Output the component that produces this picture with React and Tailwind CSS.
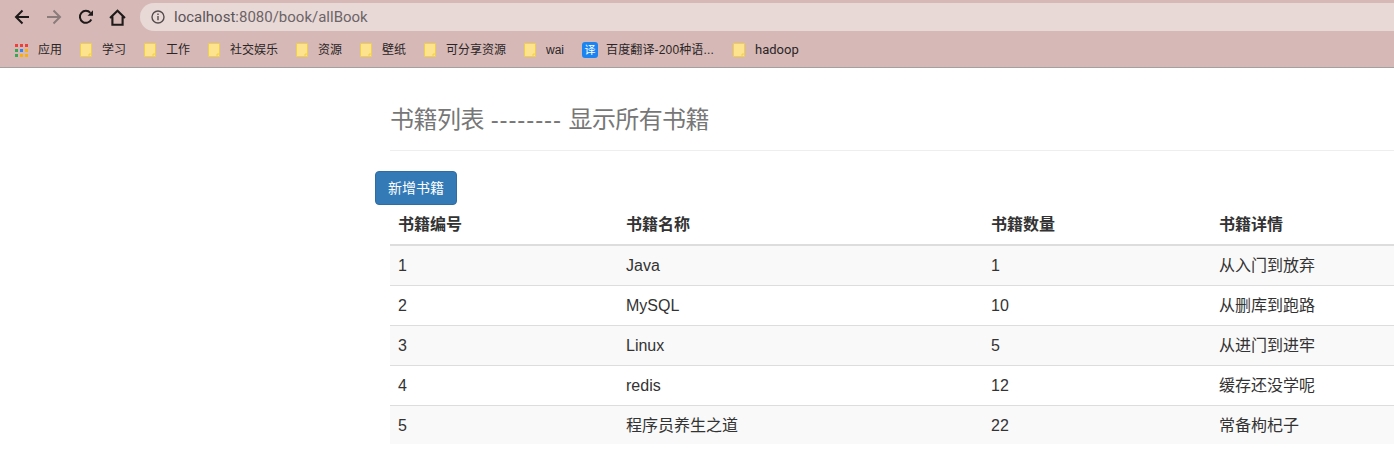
import React from 'react';

const bookmarks = [
  { label: '学习', gap: 'w-[64px]' },
  { label: '工作', gap: 'w-[64px]' },
  { label: '社交娱乐', gap: 'w-[88px]' },
  { label: '资源', gap: 'w-[64px]' },
  { label: '壁纸', gap: 'w-[64px]' },
  { label: '可分享资源', gap: 'w-[100px]' },
  { label: 'wai', gap: 'w-[58px]' },
];

const books = [
  { id: 1, name: 'Java', count: 1, detail: '从入门到放弃' },
  { id: 2, name: 'MySQL', count: 10, detail: '从删库到跑路' },
  { id: 3, name: 'Linux', count: 5, detail: '从进门到进牢' },
  { id: 4, name: 'redis', count: 12, detail: '缓存还没学呢' },
  { id: 5, name: '程序员养生之道', count: 22, detail: '常备枸杞子' },
];

const Folder = () => (
  <svg width="12" height="14" viewBox="0 0 12 14" className="shrink-0">
    <path d="M1 .5h10a.5.5 0 0 1 .5.5v12a.5.5 0 0 1-.5.5H1a.5.5 0 0 1-.5-.5V1A.5.5 0 0 1 1 .5z" fill="#fde38e" stroke="#f0cf4a" />
    <path d="M9 13v-2h2.5" fill="none" stroke="#f0cf4a" />
  </svg>
);

const AppsIcon = () => {
  const colors = ['#ef3f3a', '#ef3f3a', '#ef3f3a', '#34a853', '#2f86f0', '#fbb005', '#34a853', '#fbb005', '#fbb005'];
  return (
    <div className="grid grid-cols-3 gap-[2px] w-[13px] shrink-0">
      {colors.map((c, i) => (
        <div key={i} className="w-[3px] h-[3px]" style={{ backgroundColor: c }} />
      ))}
    </div>
  );
};

const App = () => {
  return (
    <div className="h-[467px] w-[1394px] overflow-hidden bg-white font-['Liberation_Sans','Noto_Sans_CJK_SC',sans-serif] text-[#333]">
      {/* Browser toolbar */}
      <div className="h-[68px] bg-[#d6b9b6] border-b border-[#a5a0a0] pt-[3px]">
        <div className="flex items-center h-[28px]">
          <div className="w-[140px] flex items-center">
            <svg width="16" height="16" viewBox="0 0 16 16" className="ml-[14px]" fill="none" stroke="#1f1a1a" strokeWidth="2">
              <path d="M15 8H2M8.5 1.5 2 8l6.5 6.5" />
            </svg>
            <svg width="16" height="16" viewBox="0 0 16 16" className="ml-[16px]" fill="none" stroke="#8b7b7b" strokeWidth="2">
              <path d="M1 8h13M7.5 1.5 14 8l-6.5 6.5" />
            </svg>
            <svg width="16" height="16" viewBox="0 0 16 16" className="ml-[16px]" fill="none">
              <path d="M13.3 10.5A6 6 0 1 1 12.4 3.8" stroke="#1f1a1a" strokeWidth="2" />
              <path d="M9.5 6.8H15V1.3z" fill="#1f1a1a" />
            </svg>
            <svg width="17" height="17" viewBox="0 0 16 16" className="ml-[15px]" fill="none" stroke="#1f1a1a" strokeWidth="2">
              <path d="M1 8.5 8 1.7l7 6.8M3.2 7v7.8h9.6V7" />
            </svg>
          </div>
          <div className="flex-1 h-[28px] rounded-l-[14px] bg-[#e8d9d7] flex items-center pl-[11px]">
            <svg width="14" height="14" viewBox="0 0 14 14" fill="none" stroke="#544c4c" strokeWidth="1.4">
              <circle cx="7" cy="7" r="6" />
              <path d="M7 6v4.3M7 3.4v1.5" />
            </svg>
            <span className="ml-[9px] mt-[1px] text-[15px] text-[#5b5457] font-['Roboto',sans-serif]">
              localhost<span className="text-[#6d6467]">:8080/book/allBook</span>
            </span>
          </div>
        </div>
        <div className="flex items-center h-[36px] pt-[2px] text-[12px] text-[#2b2526] pl-[15px]">
          <div className="flex items-center w-[65px]">
            <AppsIcon />
            <span className="ml-[10px]">应用</span>
          </div>
          {bookmarks.map((b) => (
            <div key={b.label} className={`flex items-center shrink-0 ${b.gap}`}>
              <Folder />
              <span className="ml-[10px]">{b.label}</span>
            </div>
          ))}
          <div className="flex items-center w-[151px] shrink-0">
            <div className="w-4 h-4 rounded-[3px] bg-[#1c84f0] text-white text-[11px] leading-4 text-center shrink-0">译</div>
            <span className="ml-2 tracking-[0.15px]">百度翻译-200种语...</span>
          </div>
          <div className="flex items-center">
            <Folder />
            <span className="ml-[10px] font-['Roboto',sans-serif] text-[13px]">hadoop</span>
          </div>
        </div>
      </div>

      {/* Page */}
      <div className="ml-[390px] w-[1140px]">
        <div className="h-[83px] border-b border-[#eee] pt-[34px]">
          <h1 className="text-[24px] leading-[36px] text-[#777]">
            <span className="tracking-[-0.5px]">书籍列表</span>
            {' '}
            <span className="tracking-[0.9px]">--------</span>
            {' '}
            <span className="tracking-[-0.6px]">显示所有书籍</span>
          </h1>
        </div>
        <button className="block mt-[20px] -ml-[15px] w-[82px] h-[34px] rounded border border-[#2e6da4] bg-[#337ab7] text-white text-[14px] leading-[20px]">
          新增书籍
        </button>
        <table className="w-[1140px] table-fixed border-collapse text-[16px]">
          <colgroup>
            <col className="w-[228px]" />
            <col className="w-[365px]" />
            <col className="w-[228px]" />
            <col className="w-[319px]" />
          </colgroup>
          <thead>
            <tr className="h-[40px] border-b-2 border-[#ddd] text-left">
              <th className="px-2 font-bold">书籍编号</th>
              <th className="px-2 font-bold">书籍名称</th>
              <th className="px-2 font-bold">书籍数量</th>
              <th className="px-2 font-bold">书籍详情</th>
            </tr>
          </thead>
          <tbody>
            {books.map((book) => (
              <tr key={book.id} className="h-[40px] last:h-[39px] border-t border-[#ddd] first:border-t-0 odd:bg-[#f9f9f9]">
                <td className="px-2 pt-[2px]">{book.id}</td>
                <td className="px-2 pt-[2px]">{book.name}</td>
                <td className="px-2 pt-[2px]">{book.count}</td>
                <td className="px-2 pt-[2px]">{book.detail}</td>
              </tr>
            ))}
          </tbody>
        </table>
      </div>
    </div>
  );
};

export default App;
